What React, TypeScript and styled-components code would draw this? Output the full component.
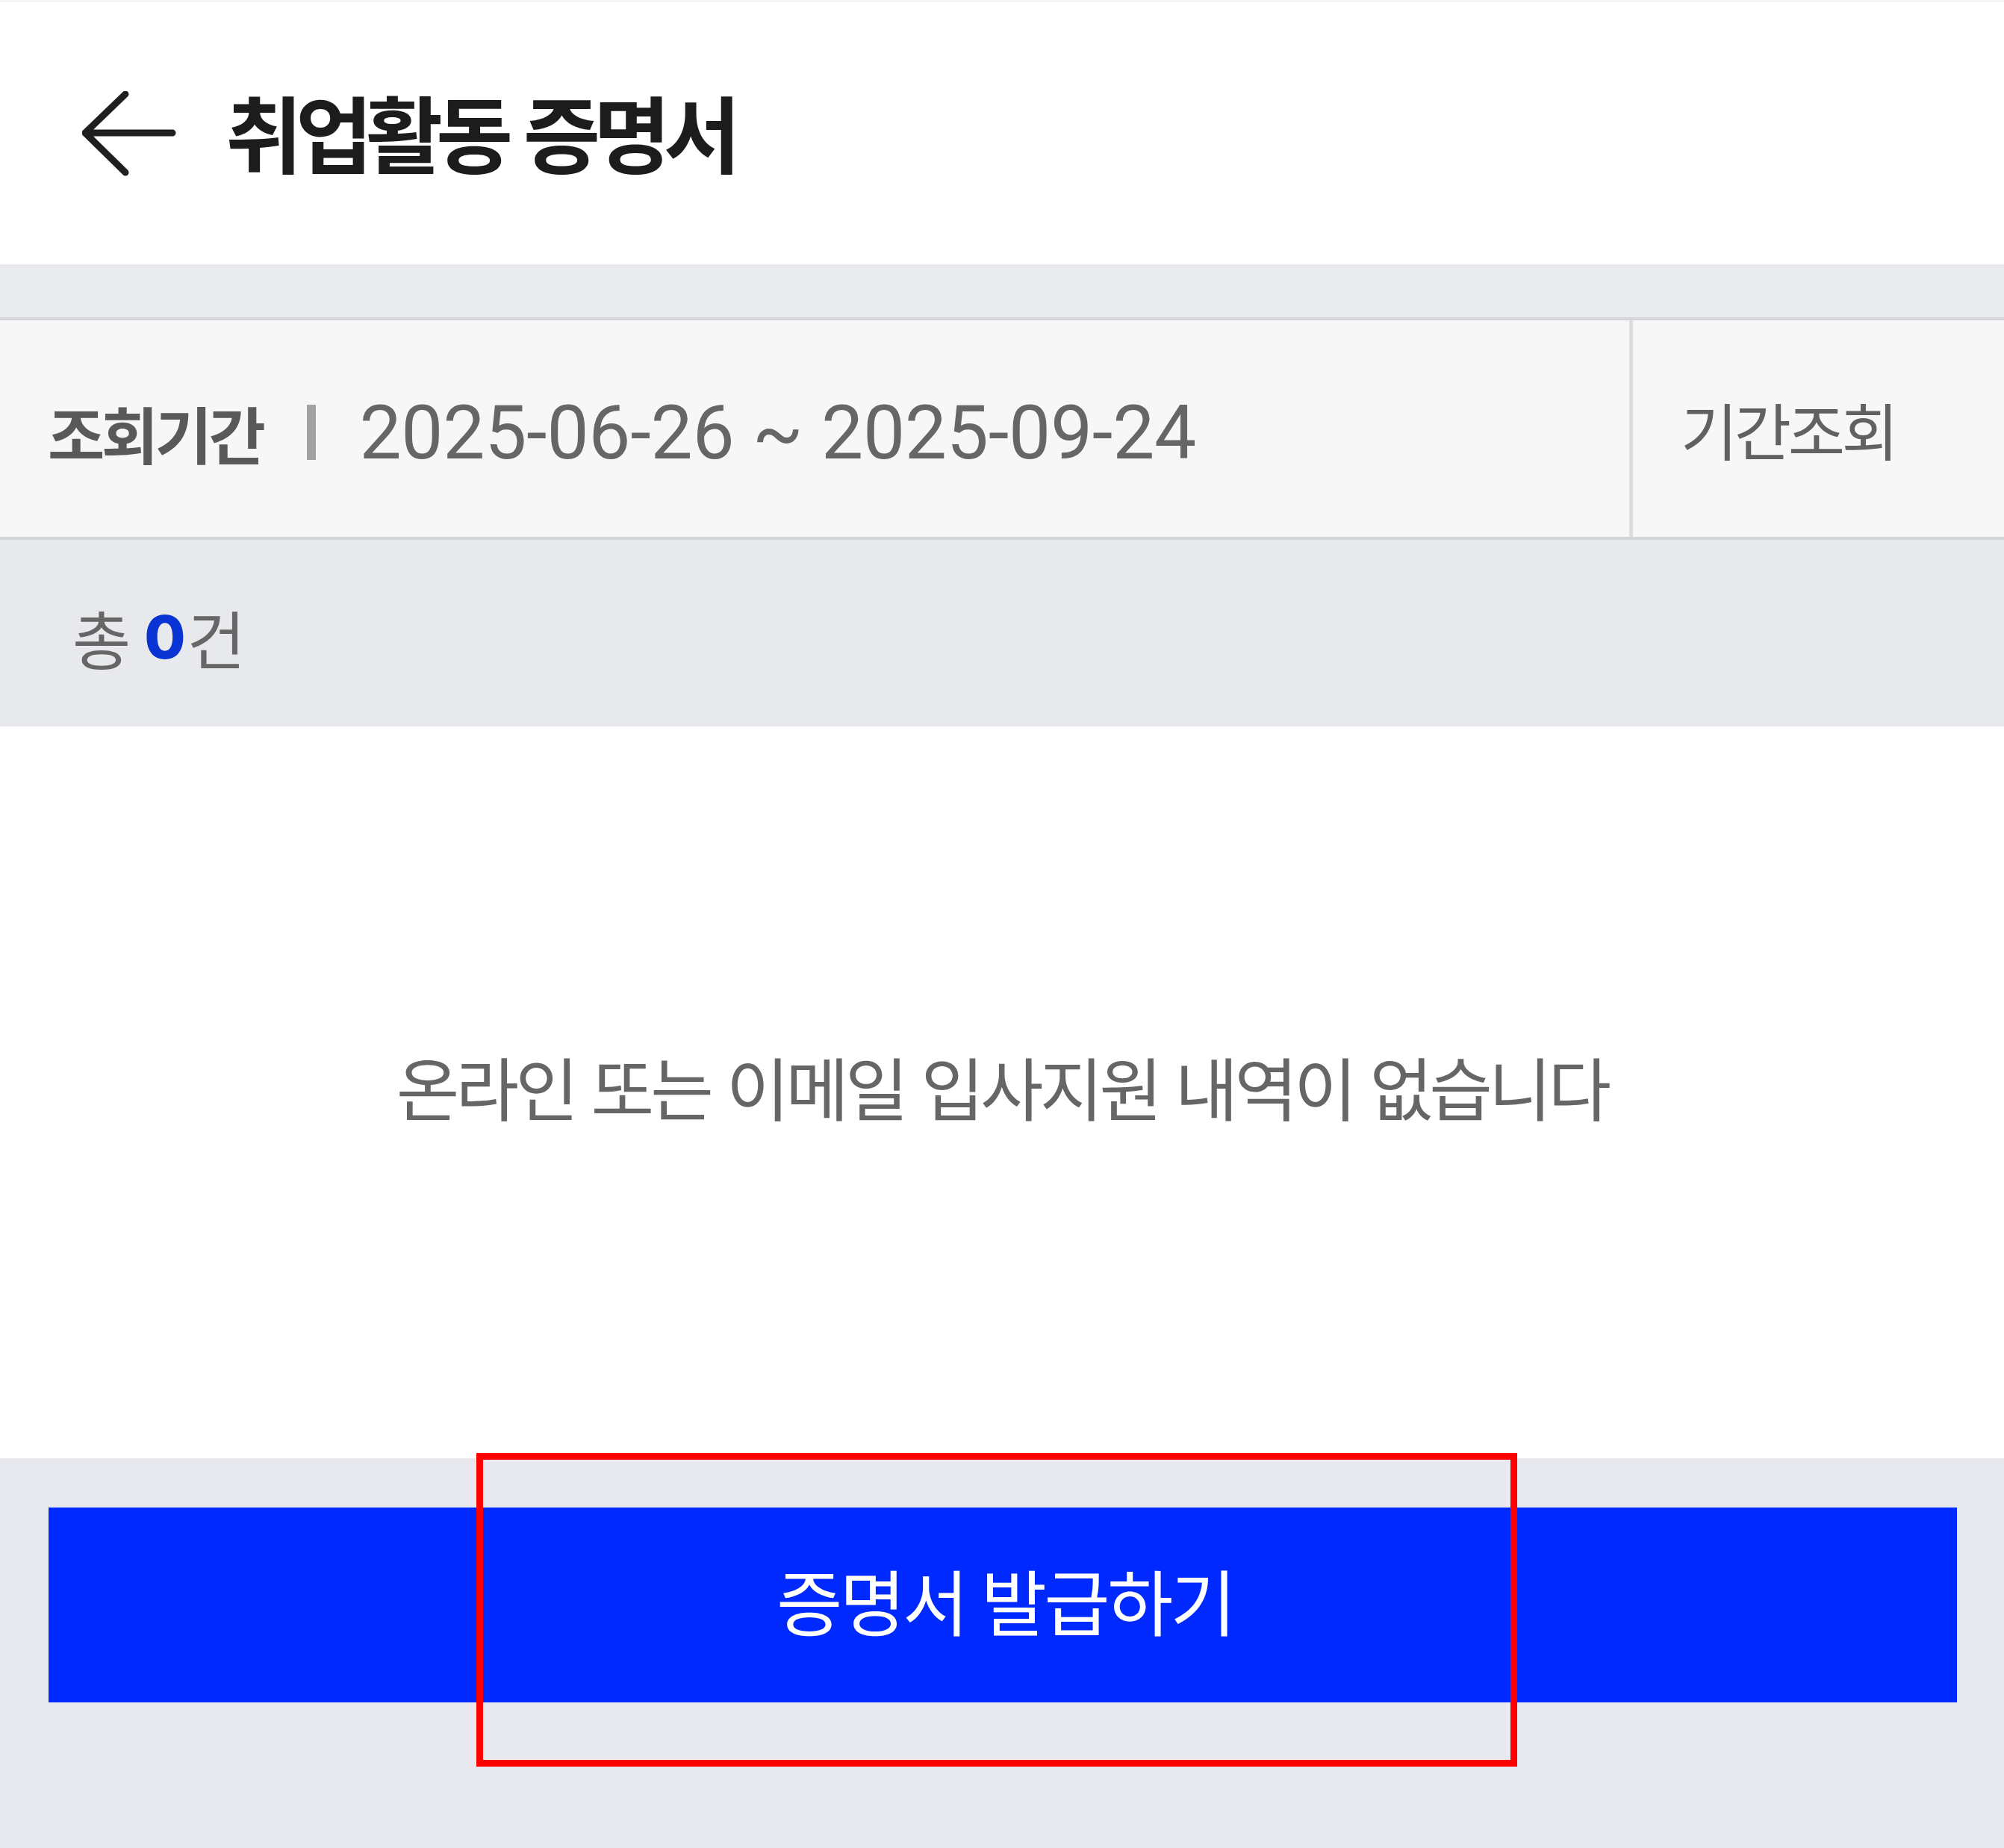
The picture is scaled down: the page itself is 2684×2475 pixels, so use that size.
import React from "react";
import styled, { createGlobalStyle } from "styled-components";

const GlobalStyle = createGlobalStyle`
  html, body {
    margin: 0;
    padding: 0;
    background: #ffffff;
  }
  body {
    font-family: Roboto, "Noto Sans CJK KR", sans-serif;
  }
`;

const KR = `Roboto, "Noto Sans CJK KR", "Noto Sans", sans-serif`;

const Page = styled.div`
  position: relative;
  width: 2684px;
  min-height: 2475px;
  display: flex;
  flex-direction: column;
  background: #ffffff;
`;

const Header = styled.header`
  height: 351px;
  border-top: 3px solid #f6f6f6;
  display: flex;
  align-items: center;
  padding-left: 110px;
  background: #ffffff;
`;

const BackButton = styled.button`
  border: none;
  background: transparent;
  padding: 0;
  margin: 0 66px 0 0;
  width: 126px;
  height: 114px;
  display: flex;
  cursor: pointer;
`;

const Title = styled.h1`
  margin: 0;
  font-family: ${KR};
  font-size: 112px;
  font-weight: 700;
  letter-spacing: -9px;
  word-spacing: 4px;
  color: #1c1c1c;
  line-height: 1;
  padding-top: 14px;
`;

const Band = styled.div`
  height: 71px;
  background: #e8eaed;
`;

const FilterPanel = styled.section`
  height: 290px;
  display: flex;
  background: #f7f7f7;
  border-top: 4px solid #d3d5d9;
  border-bottom: 4px solid #d3d5d9;
`;

const PeriodInfo = styled.div`
  flex: 1;
  display: flex;
  align-items: center;
  padding-left: 64px;
  padding-top: 10px;
  border-right: 5px solid #dcdee1;
`;

const PeriodLabel = styled.span`
  font-family: ${KR};
  font-size: 83px;
  font-weight: 700;
  letter-spacing: -4.5px;
  color: #595959;
`;

const Separator = styled.span`
  width: 12px;
  height: 74px;
  background: #a3a3a3;
  margin: 0 58px 0 60px;
`;

const PeriodDates = styled.span`
  font-family: Roboto, sans-serif;
  font-size: 100px;
  font-weight: 400;
  color: #666666;
  letter-spacing: -0.3px;
`;

const PeriodButton = styled.button`
  width: 497px;
  border: none;
  background: transparent;
  display: flex;
  align-items: center;
  padding: 0 0 0 64px;
  font-family: ${KR};
  font-size: 83px;
  font-weight: 400;
  letter-spacing: -4.5px;
  color: #616161;
  cursor: pointer;
`;

const CountBar = styled.div`
  height: 250px;
  background: #e8e9ed;
  display: flex;
  align-items: center;
  padding-left: 97px;
  padding-top: 8px;
  box-sizing: border-box;
  font-family: ${KR};
  font-size: 85px;
  color: #666666;
  letter-spacing: -4px;
`;

const CountNumber = styled.b`
  font-family: Inter, Roboto, sans-serif;
  font-size: 80px;
  font-weight: 800;
  color: #0a33d4;
  letter-spacing: 0;
  margin-left: 22px;
  margin-right: 2px;
`;

const EmptyArea = styled.div`
  height: 980px;
  display: flex;
  align-items: center;
  justify-content: center;
  padding-bottom: 20px;
  box-sizing: border-box;
  background: #ffffff;
`;

const EmptyText = styled.p`
  margin: 0;
  font-family: ${KR};
  font-size: 92px;
  font-weight: 400;
  letter-spacing: -5px;
  word-spacing: 4px;
  color: #666666;
`;

const Footer = styled.footer`
  flex: 1;
  background: #e8e9ee;
  padding: 66px 63px 0 65px;
`;

const PrimaryButton = styled.button`
  width: 100%;
  height: 261px;
  border: none;
  background: #0029ff;
  color: #ffffff;
  font-family: ${KR};
  font-size: 96px;
  font-weight: 400;
  letter-spacing: -3.75px;
  display: flex;
  align-items: center;
  justify-content: center;
  padding: 0 0 16px 6px;
  cursor: pointer;
`;

const Highlight = styled.div`
  position: absolute;
  left: 638px;
  top: 1946px;
  width: 1394px;
  height: 420px;
  box-sizing: border-box;
  border: 9px solid #ff0000;
  pointer-events: none;
`;

const BackIcon = () => (
  <svg width="126" height="114" viewBox="0 0 126 114" fill="none">
    <path
      d="M58 4 L4 56 L58 109 M5 56 L121 56"
      stroke="#1f1f1f"
      strokeWidth="9"
      strokeLinecap="round"
      strokeLinejoin="round"
    />
  </svg>
);

export default function App() {
  return (
    <>
      <GlobalStyle />
      <Page>
        <Header>
          <BackButton aria-label="뒤로가기">
            <BackIcon />
          </BackButton>
          <Title>취업활동 증명서</Title>
        </Header>
        <Band />
        <FilterPanel>
          <PeriodInfo>
            <PeriodLabel>조회기간</PeriodLabel>
            <Separator />
            <PeriodDates>2025-06-26 ~ 2025-09-24</PeriodDates>
          </PeriodInfo>
          <PeriodButton>기간조회</PeriodButton>
        </FilterPanel>
        <CountBar>
          총<CountNumber>0</CountNumber>건
        </CountBar>
        <EmptyArea>
          <EmptyText>온라인 또는 이메일 입사지원 내역이 없습니다</EmptyText>
        </EmptyArea>
        <Footer>
          <PrimaryButton>증명서 발급하기</PrimaryButton>
        </Footer>
        <Highlight />
      </Page>
    </>
  );
}
